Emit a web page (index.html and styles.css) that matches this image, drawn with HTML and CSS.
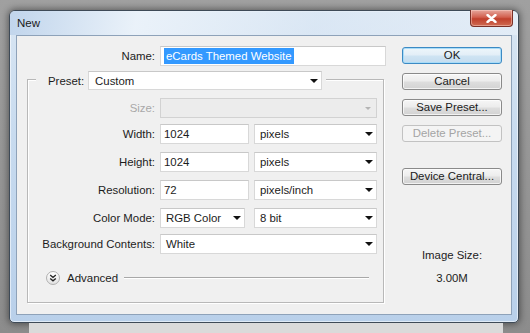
FILE: index.html
```
<!DOCTYPE html>
<html>
<head>
<meta charset="utf-8">
<link rel="stylesheet" href="styles.css">
</head>
<body>
<div class="window">
  <div class="titlebar">
    <span class="title">New</span>
    <div class="close"><svg width="13" height="9" viewBox="0 0 13 9"><path d="M2.5 1 L10.5 8 M10.5 1 L2.5 8" stroke="#fff" stroke-width="2.4" stroke-linecap="round"/></svg></div>
  </div>
  <div class="client">
    <div class="main">
      <div class="row name-row">
        <span class="label">Name:</span>
        <div class="field name-field"><span class="sel">eCards Themed Website</span></div>
      </div>
      <div class="group">
        <div class="group-head">
          <span class="label">Preset:</span>
          <div class="field select preset">Custom<i class="arrow"></i></div>
        </div>
        <div class="row grow r-size">
          <span class="label disabled">Size:</span>
          <div class="field select off wide"><i class="arrow"></i></div>
        </div>
        <div class="row grow r-width">
          <span class="label">Width:</span>
          <div class="pair">
            <div class="field input num">1024</div>
            <div class="field select unit">pixels<i class="arrow"></i></div>
          </div>
        </div>
        <div class="row grow r-height">
          <span class="label">Height:</span>
          <div class="pair">
            <div class="field input num">1024</div>
            <div class="field select unit">pixels<i class="arrow"></i></div>
          </div>
        </div>
        <div class="row grow r-res">
          <span class="label">Resolution:</span>
          <div class="pair">
            <div class="field input num">72</div>
            <div class="field select unit">pixels/inch<i class="arrow"></i></div>
          </div>
        </div>
        <div class="row grow r-mode">
          <span class="label">Color Mode:</span>
          <div class="pair mode">
            <div class="field select cmode">RGB Color<i class="arrow"></i></div>
            <div class="field select unit">8 bit<i class="arrow"></i></div>
          </div>
        </div>
        <div class="row grow r-bg">
          <span class="label">Background Contents:</span>
          <div class="field select wide">White<i class="arrow"></i></div>
        </div>
        <div class="advanced">
          <span class="adv-icon"><svg width="8" height="8" viewBox="0 0 8 8"><path d="M1.2 1 L4 3.4 L6.8 1 M1.2 4.4 L4 6.8 L6.8 4.4" fill="none" stroke="#222" stroke-width="1.3"/></svg></span>
          <span class="adv-text">Advanced</span>
          <span class="adv-line"></span>
        </div>
      </div>
    </div>
    <div class="side">
      <div class="btn default">OK</div>
      <div class="btn">Cancel</div>
      <div class="btn">Save Preset...</div>
      <div class="btn disabled-btn">Delete Preset...</div>
      <div class="btn device">Device Central...</div>
      <div class="imgsize">Image Size:</div>
      <div class="imgval">3.00M</div>
    </div>
  </div>
</div>
<div class="under"></div>
</body>
</html>
```
FILE: styles.css
```
* { box-sizing: border-box; }
html, body { margin: 0; padding: 0; }
body {
  width: 530px;
  height: 333px;
  overflow: hidden;
  background: linear-gradient(to bottom, #a0a0a0 0%, #8c8c8c 100%);
  font-family: "Liberation Sans", Arial, sans-serif;
  font-size: 11.4px;
  color: #1c1c1c;
}
.window {
  margin: 10px 0 0 9px;
  width: 510px;
  height: 313px;
  border: 1px solid #3e4a57;
  border-radius: 6px 6px 5px 5px;
  background: linear-gradient(to bottom, #d9e6f3 0%, #c8dbef 40%, #b9d0ea 100%);
  box-shadow: 0 0 7px 1px rgba(0,0,0,0.45), inset 0 0 0 1px rgba(255,255,255,0.55);
  display: flex;
  flex-direction: column;
}
.titlebar {
  height: 24px;
  display: flex;
  justify-content: space-between;
  align-items: flex-start;
  background: linear-gradient(100deg, rgba(190,211,235,0.9) 0%, rgba(236,243,250,0.9) 25%, rgba(220,232,245,0.6) 60%, rgba(234,241,249,0.6) 100%);
  border-radius: 5px 5px 0 0;
}
.title {
  padding: 6px 0 0 7px;
  font-size: 11.5px;
  color: #1a1a1a;
}
.close {
  width: 43px;
  height: 17px;
  margin: -1px 5px 0 0;
  border: 1px solid #7a3027;
  border-top: none;
  border-radius: 0 0 4px 4px;
  background: linear-gradient(to bottom, #e6a79c 0%, #d2604f 45%, #c0402c 55%, #cf6b52 100%);
  box-shadow: inset 0 0 0 1px rgba(255,220,210,0.45);
  display: flex;
  align-items: center;
  justify-content: center;
}
.client {
  margin: 0 6px;
  width: 496px;
  height: 280px;
  border: 1px solid #8ea2b9;
  background: #f0f0f0;
  display: flex;
}
.main {
  width: 385px;
}
.row {
  display: grid;
  grid-template-columns: 138px 226px;
  column-gap: 5px;
  align-items: center;
  height: 20px;
}
.name-row { margin-top: 10px; }
.label {
  text-align: right;
  white-space: nowrap;
}
.label.disabled { color: #a8a8a8; }
.field {
  height: 20px;
  background: #fff;
  border: 1px solid #d8d8d8;
  border-top-color: #c8c8c8;
  display: flex;
  align-items: center;
  position: relative;
  white-space: nowrap;
}
.name-field { padding-left: 3px; }
.sel {
  background: #3399ff;
  color: #fff;
  height: 16px;
  line-height: 16px;
  padding: 0 2px 0 2px;
}
.group {
  margin: 13px 0 0 10px;
  width: 357px;
  border: 1px solid #b8b8b8;
  box-shadow: 1px 1px 0 #fff, inset 1px 1px 0 #fff;
  padding: 0 5px 17px 0;
}
.group-head {
  margin: -9px 0 0 8px;
  width: 290px;
  padding: 0 4px 0 12px;
  background: #f0f0f0;
  display: flex;
  align-items: center;
  gap: 4px;
}
.select { padding-left: 5px; }
.preset { width: 234px; height: 19px; padding-left: 6px; }
.arrow {
  position: absolute;
  right: 3px;
  top: 7px;
  width: 0;
  height: 0;
  border-left: 4px solid transparent;
  border-right: 4px solid transparent;
  border-top: 4px solid #111;
}
.grow {
  grid-template-columns: 127px 217px;
}
.r-size { margin-top: 8px; }
.r-width { margin-top: 6px; }
.r-height, .r-res, .r-mode { margin-top: 8px; }
.r-bg { margin-top: 6px; }
.off {
  background: #ececec;
  border-color: #d2d2d2;
}
.off .arrow { border-top-color: #b4b4b4; border-left-width: 3px; border-right-width: 3px; border-top-width: 3px; top: 8px; right: 5px; }
.pair {
  display: flex;
  gap: 5px;
}
.pair.mode { gap: 9px; }
.num { width: 89px; padding-left: 3px; }
.unit { width: 123px; }
.cmode { width: 85px; }
.advanced {
  margin-top: 17px;
  height: 14px;
  display: flex;
  align-items: center;
  padding-left: 18px;
}
.adv-icon {
  width: 14px;
  height: 14px;
  border-radius: 50%;
  border: 1px solid #b0b0b0;
  background: linear-gradient(to bottom, #ffffff 0%, #e2e2e2 100%);
  display: flex;
  align-items: center;
  justify-content: center;
}
.adv-text {
  margin-left: 7px;
  font-size: 11.5px;
}
.adv-line {
  flex: 1;
  height: 2px;
  margin: 0 9px 0 6px;
  border-top: 1px solid #a8a8a8;
  border-bottom: 1px solid #fff;
}
.side {
  width: 100px;
  margin-top: 11px;
  display: flex;
  flex-direction: column;
  align-items: stretch;
}
.btn {
  height: 17px;
  border: 1px solid #8a8a8a;
  border-radius: 3px;
  background: linear-gradient(to bottom, #f6f6f6 0%, #ececec 48%, #dedede 52%, #d2d2d2 100%);
  box-shadow: inset 0 0 0 1px rgba(255,255,255,0.7);
  text-align: center;
  line-height: 15px;
  margin-bottom: 9px;
  color: #1a1a1a;
}
.btn.default {
  border-color: #3c8ac4;
  box-shadow: inset 0 0 0 1px #a8dcf8;
  background: linear-gradient(to bottom, #eef6fb 0%, #e2eef7 48%, #cfe4f3 52%, #c4dcef 100%);
}
.btn.disabled-btn {
  border-color: #c2c2c2;
  background: #f4f4f4;
  color: #a4a4a4;
  box-shadow: none;
}
.btn.device { margin-top: 17px; }
.imgsize {
  margin-top: 54px;
  text-align: center;
  line-height: 14px;
}
.imgval {
  margin-top: 9px;
  text-align: center;
  line-height: 14px;
}
.under {
  margin: 0 0 0 29px;
  width: 474px;
  height: 20px;
  background: #dadada;
}
```
